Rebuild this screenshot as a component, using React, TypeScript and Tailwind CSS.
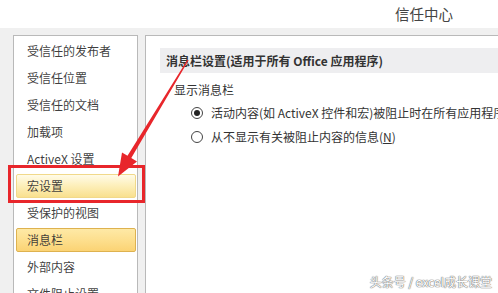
const NAV_ITEMS = [
  "受信任的发布者",
  "受信任位置",
  "受信任的文档",
  "加载项",
  "ActiveX 设置",
  "宏设置",
  "受保护的视图",
  "消息栏",
  "外部内容",
  "文件阻止设置",
];

const FONT = "font-['Microsoft_YaHei','Noto_Sans_CJK_SC',sans-serif]";

function NavItem({ label }: { label: string }) {
  const hover = label === "宏设置";
  const selected = label === "消息栏";
  let box = "border-transparent";
  if (hover) {
    box =
      "border-[#f1d98a] bg-[linear-gradient(180deg,#fffbe8_0%,#fdf0bd_45%,#f9e08e_100%)]";
  }
  if (selected) {
    box =
      "border-[#deb24f] bg-[linear-gradient(180deg,#fee9a6_0%,#fddf8e_50%,#fbd374_100%)]";
  }
  return (
    <div className="flex h-[27px] items-center pl-[2px] pr-[1px]">
      <div
        className={`flex h-[24px] w-full items-center rounded-[2px] border pl-[10px] text-[12px] text-[#333]/95 ${box}`}
      >
        {label}
      </div>
    </div>
  );
}

function Radio({ checked }: { checked: boolean }) {
  return (
    <span className="flex h-[12px] w-[12px] shrink-0 items-center justify-center rounded-full border border-[#444] bg-white">
      {checked && <span className="h-[6px] w-[6px] rounded-full bg-[#222]" />}
    </span>
  );
}

export default function App() {
  return (
    <div
      className={`relative h-[293px] w-[498px] overflow-hidden bg-[#f0f0f0] ${FONT}`}
    >
      <div className="flex h-[28px] items-center justify-end bg-white pr-[45px] text-[14.5px] text-[#444]">
        信任中心
      </div>

      <div className="flex gap-[7px] pl-[13px] pt-[7px]">
        <div className="h-[300px] w-[125px] shrink-0 border border-[#b9b9b9] bg-white pt-[1px]">
          {NAV_ITEMS.map((item) => (
            <NavItem key={item} label={item} />
          ))}
        </div>

        <div className="h-[300px] flex-1 border-y border-l border-[#b9b9b9] bg-white pl-[14px] pt-[12px]">
          <div className="flex h-[25px] items-center whitespace-nowrap bg-[#eeeef0] pl-[6px] text-[12px] font-bold text-[#333]">
            消息栏设置(适用于所有 Office 应用程序)
          </div>
          <div className="mt-[9px] pl-[14px] text-[12px] leading-[16px] text-[#333]">
            显示消息栏
          </div>
          <div className="mt-[6px] flex h-[18px] items-center gap-[8px] whitespace-nowrap pl-[31px] text-[12px] text-[#333]">
            <Radio checked />
            <span>活动内容(如 ActiveX 控件和宏)被阻止时在所有应用程序中显示消息栏(A)</span>
          </div>
          <div className="mt-[6px] flex h-[18px] items-center gap-[8px] whitespace-nowrap pl-[31px] text-[12px] text-[#333]">
            <Radio checked={false} />
            <span>
              从不显示有关被阻止内容的信息(<span className="underline">N</span>)
            </span>
          </div>
        </div>
      </div>

      <div className="absolute left-[8px] top-[165px] h-[38px] w-[137px] border-[3px] border-[#e8262b]" />

      <svg
        className="pointer-events-none absolute left-0 top-0"
        width="498"
        height="293"
        viewBox="0 0 498 293"
      >
        <polygon
          points="188.6,60.3 131.3,158 137,161.6 118,176.5 122,152.4 127.5,155.8 187.4,59.7"
          fill="#e8262b"
        />
      </svg>

      <div className="absolute bottom-[2px] right-[6px] text-[12px] text-white [text-shadow:0_0_1px_#777,0_0_1px_#777,0_0_1px_#777]">
        头条号 / excel成长课堂
      </div>
    </div>
  );
}
